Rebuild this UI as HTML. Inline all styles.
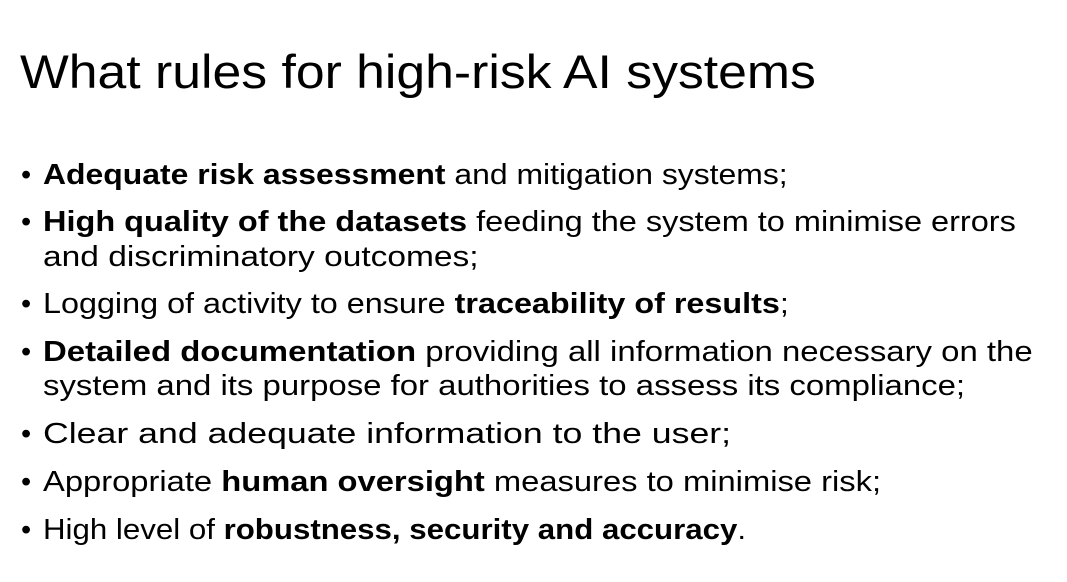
<!DOCTYPE html>
<html><head><meta charset="utf-8"><style>
body{margin:0;width:1067px;height:582px;background:#fff;overflow:hidden;position:relative;font-family:"Liberation Sans",sans-serif;color:#000}
.t{position:absolute;left:20px;top:44px;font-size:47px;line-height:56px;white-space:nowrap;transform-origin:0 0;transform:scaleX(1.1)}
.l{position:absolute;left:43px;font-size:29px;line-height:34px;white-space:nowrap;transform-origin:0 0;transform:scaleX(1.1)}
.b{position:absolute;left:21px;font-size:29px;line-height:34px}
</style></head><body>
<div class="t">What rules for high-risk AI systems</div>
<div class="b" style="top:158px">•</div>
<div class="l" style="top:158px"><b>Adequate risk assessment</b> and mitigation systems;</div>
<div class="b" style="top:205px">•</div>
<div class="l" style="top:205px;transform:scaleX(1.12)"><b>High quality of the datasets</b> feeding the system to minimise errors</div>
<div class="l" style="top:240px;transform:scaleX(1.155)">and discriminatory outcomes;</div>
<div class="b" style="top:287px">•</div>
<div class="l" style="top:287px;transform:scaleX(1.115)">Logging of activity to ensure <b>traceability of results</b>;</div>
<div class="b" style="top:335px">•</div>
<div class="l" style="top:335px;transform:scaleX(1.135)"><b>Detailed documentation</b> providing all information necessary on the</div>
<div class="l" style="top:369px;transform:scaleX(1.135)">system and its purpose for authorities to assess its compliance;</div>
<div class="b" style="top:417px">•</div>
<div class="l" style="top:417px;transform:scaleX(1.23)">Clear and adequate information to the user;</div>
<div class="b" style="top:465px">•</div>
<div class="l" style="top:465px;transform:scaleX(1.128)">Appropriate <b>human oversight</b> measures to minimise risk;</div>
<div class="b" style="top:513px">•</div>
<div class="l" style="top:513px;transform:scaleX(1.077)">High level of <b>robustness, security and accuracy</b>.</div>
</body></html>
